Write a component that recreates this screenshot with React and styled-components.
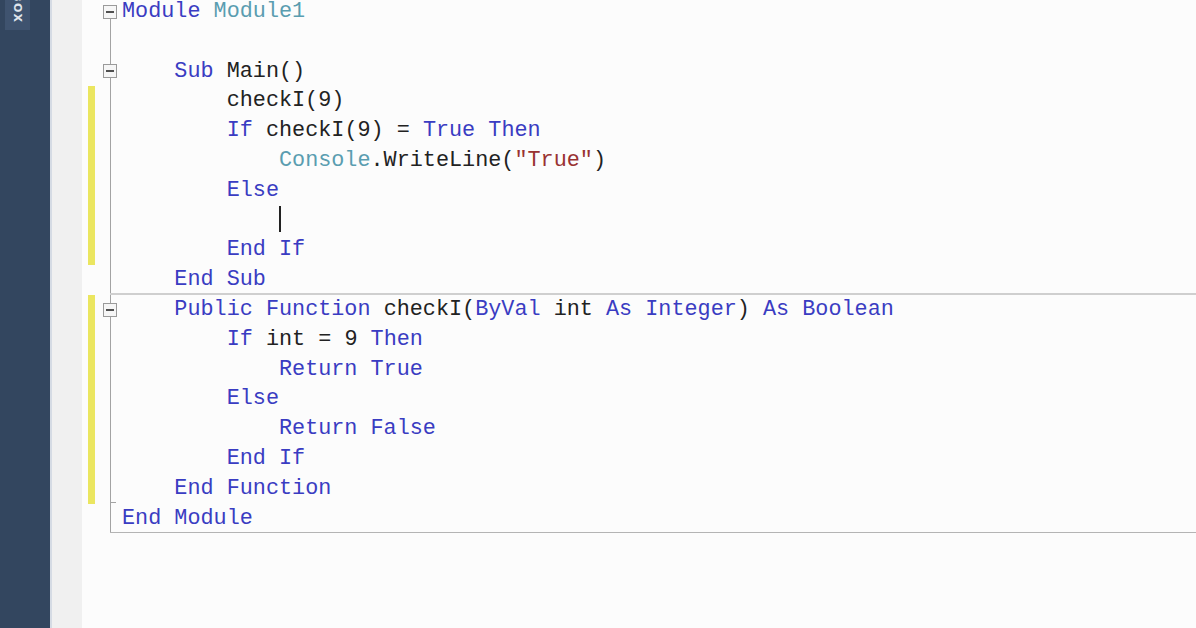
import React from "react";
import styled, { createGlobalStyle, css } from "styled-components";

const Global = createGlobalStyle`
  html, body, #root { height: 100%; margin: 0; padding: 0; }
  body { overflow: hidden; background: #fcfcfc; }
`;

const Shell = styled.div`
  display: flex;
  height: 100%;
  width: 100%;
`;

const Sidebar = styled.aside`
  width: 50px;
  flex: none;
  background: #33465f;
  border-right: 2px solid #d5dbe4;
  display: flex;
  flex-direction: column;
  align-items: flex-start;
  overflow: hidden;
`;

const SideTab = styled.div`
  writing-mode: vertical-rl;
  margin-top: -50px;
  margin-left: 5px;
  padding: 4px 6px 6px;
  background: #3f536f;
  color: #dfe4ec;
  font-family: "DejaVu Sans", "Liberation Sans", sans-serif;
  font-weight: bold;
  font-size: 11px;
  letter-spacing: 1.5px;
`;

const Strip = styled.div`
  width: 30px;
  flex: none;
  background: #f0f0f0;
`;

const Editor = styled.main`
  flex: 1;
  background: #fcfcfc;
  overflow: hidden;
`;

const Lines = styled.div`
  margin-top: -3px;
  display: flex;
  flex-direction: column;
`;

const Row = styled.div`
  display: grid;
  grid-template-columns: 6px 7px 5px 21px 1px 1fr;
  height: 29.8px;
`;

const Marker = styled.div`
  grid-column: 2;
  background: ${(p) => (p.$changed ? "#ebe660" : "transparent")};
`;

const lineColor = "#a3a3a3";

const Outline = styled.div`
  grid-column: 4;
  grid-row: 1;
  display: flex;
  align-items: center;
  justify-content: center;
  background-repeat: no-repeat;
  ${(p) =>
    p.$mode === "start" &&
    css`
      background-image: linear-gradient(${lineColor}, ${lineColor});
      background-size: 1px 50%;
      background-position: 10px 100%;
    `}
  ${(p) =>
    (p.$mode === "open" || p.$mode === "mid") &&
    css`
      background-image: linear-gradient(${lineColor}, ${lineColor});
      background-size: 1px 100%;
      background-position: 10px 0;
    `}
  ${(p) =>
    p.$mode === "end" &&
    css`
      background-image: linear-gradient(${lineColor}, ${lineColor}),
        linear-gradient(${lineColor}, ${lineColor});
      background-size: 1px 100%, 6px 1px;
      background-position: 10px 0, 10px calc(100% - 1px);
    `}
`;

const SepLine = styled.div`
  grid-column: 4 / span 3;
  grid-row: 1;
  margin-left: 10px;
  align-self: end;
  height: ${(p) => p.$w}px;
  background: ${(p) => p.$c};
`;

const Box = styled.span`
  width: 12px;
  height: 12px;
  border: 1px solid #9a9a9a;
  background: #f6f6f6;
  display: flex;
  align-items: center;
  justify-content: center;
  margin-left: -1px;
  &::after {
    content: "";
    width: 8px;
    height: 2px;
    background: #505050;
  }
`;

const Code = styled.div`
  grid-column: 6;
  grid-row: 1;
  font-family: "Liberation Mono", "DejaVu Sans Mono", monospace;
  font-size: 21.8px;
  line-height: 29.8px;
  white-space: pre;
  color: #222;
`;

const colors = {
  k: "#3a3cc2",
  p: "#222222",
  t: "#5a9db0",
  s: "#993232",
};

const Tok = styled.span`
  color: ${(p) => colors[p.$t]};
`;

const Caret = styled.span`
  display: inline-block;
  width: 2px;
  height: 26px;
  background: #222;
  vertical-align: -6px;
`;

const k = (x) => ["k", x];
const p = (x) => ["p", x];
const t = (x) => ["t", x];
const s = (x) => ["s", x];

const lines = [
  { tokens: [k("Module"), p(" "), t("Module1")], mode: "start" },
  { tokens: [], mode: "mid" },
  { tokens: [p("    "), k("Sub"), p(" Main()")], mode: "open" },
  { tokens: [p("        checkI(9)")], mode: "mid", changed: true },
  {
    tokens: [p("        "), k("If"), p(" checkI(9) = "), k("True"), p(" "), k("Then")],
    mode: "mid",
    changed: true,
  },
  {
    tokens: [p("            "), t("Console"), p(".WriteLine("), s('"True"'), p(")")],
    mode: "mid",
    changed: true,
  },
  { tokens: [p("        "), k("Else")], mode: "mid", changed: true },
  { tokens: [p("            ")], mode: "mid", changed: true, caret: true },
  { tokens: [p("        "), k("End If")], mode: "mid", changed: true },
  { tokens: [p("    "), k("End Sub")], mode: "mid", sep: { w: 2, c: "#cfcfcf" } },
  {
    tokens: [
      p("    "),
      k("Public Function"),
      p(" checkI("),
      k("ByVal"),
      p(" int "),
      k("As Integer"),
      p(") "),
      k("As Boolean"),
    ],
    mode: "open",
    changed: true,
  },
  {
    tokens: [p("        "), k("If"), p(" int = 9 "), k("Then")],
    mode: "mid",
    changed: true,
  },
  { tokens: [p("            "), k("Return True")], mode: "mid", changed: true },
  { tokens: [p("        "), k("Else")], mode: "mid", changed: true },
  { tokens: [p("            "), k("Return False")], mode: "mid", changed: true },
  { tokens: [p("        "), k("End If")], mode: "mid", changed: true },
  { tokens: [p("    "), k("End Function")], mode: "end", changed: true },
  { tokens: [k("End Module")], mode: "mid", sep: { w: 1, c: "#b4b4b4" } },
];

export default function App() {
  return (
    <>
      <Global />
      <Shell>
        <Sidebar>
          <SideTab>TOOLBOX</SideTab>
        </Sidebar>
        <Strip />
        <Editor>
          <Lines>
            {lines.map((ln, i) => (
              <Row key={i}>
                <Marker $changed={ln.changed} />
                <Outline $mode={ln.mode}>
                  {(ln.mode === "start" || ln.mode === "open") && <Box />}
                </Outline>
                {ln.sep && <SepLine $w={ln.sep.w} $c={ln.sep.c} />}
                <Code>
                  {ln.tokens.map(([ty, tx], j) => (
                    <Tok key={j} $t={ty}>
                      {tx}
                    </Tok>
                  ))}
                  {ln.caret && <Caret />}
                </Code>
              </Row>
            ))}
          </Lines>
        </Editor>
      </Shell>
    </>
  );
}
